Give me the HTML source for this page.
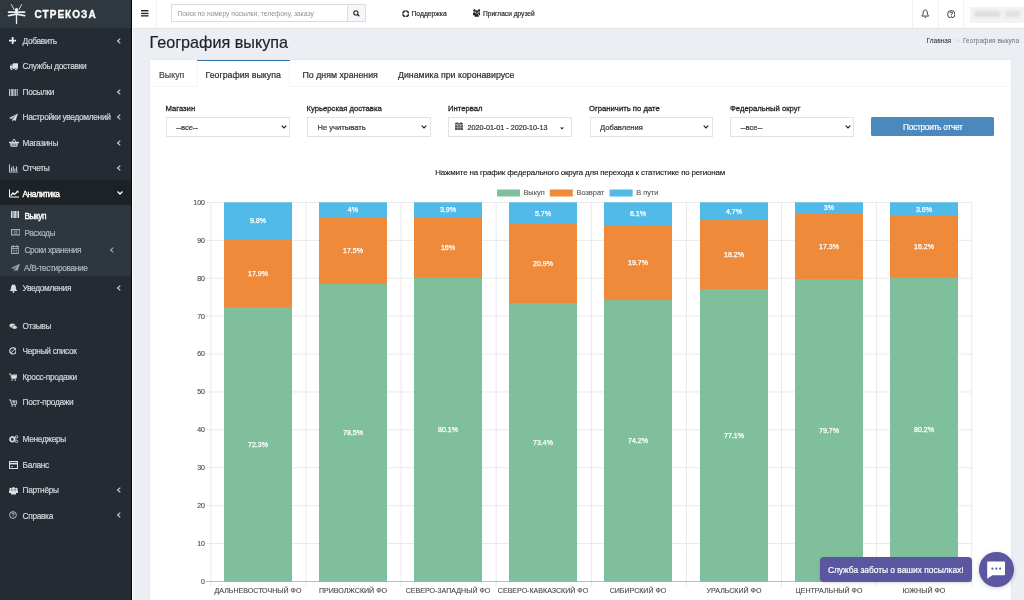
<!DOCTYPE html>
<html><head><meta charset="utf-8">
<style>
*{box-sizing:border-box;margin:0;padding:0}
html,body{width:1024px;height:600px;overflow:hidden}
body{font-family:"Liberation Sans",sans-serif;background:#ebeef3;position:relative;color:#212529}
.abs{position:absolute}
.txt{white-space:nowrap}
#sb{position:absolute;left:0;top:0;width:131px;height:600px;background:#242b32}
#sbline{position:absolute;left:131px;top:0;width:1px;height:600px;background:#05070a}
#sbwhite{position:absolute;left:132px;top:0;width:1px;height:600px;background:#fff}
#logo{position:absolute;left:0;top:0;width:131px;height:28px;background:#2e383e}
.logotxt{position:absolute;left:34.5px;top:9px;font-size:10px;font-weight:bold;color:#fff;letter-spacing:1.05px;line-height:11px;-webkit-text-stroke:0.3px #fff}
.nav{position:absolute;left:22.5px;font-size:8.3px;letter-spacing:-0.3px;color:#d2d6db;white-space:nowrap;line-height:10px;-webkit-text-stroke:0.2px currentColor}
.ico{position:absolute;left:8.5px;width:9px;height:9px}
.chev{position:absolute;left:116px;width:6px;height:6px}
#hdr{position:absolute;left:133px;top:0;width:891px;height:29px;background:#fff;border-bottom:1px solid #dfe3e7}
.tab{top:70px;font-size:8.8px;line-height:10px;-webkit-text-stroke:0.22px currentColor}
.lbl{top:103.5px;font-size:7.7px;color:#24282c;line-height:9px;-webkit-text-stroke:0.3px #24282c}
.sel{top:117.2px;height:19.4px;border:1px solid #e0e2e5;background:#fff}
.sel span{position:absolute;top:5px;font-size:7.6px;color:#33383d;line-height:9px;white-space:nowrap;-webkit-text-stroke:0.22px #33383d}
.sel svg{position:absolute;right:2.5px;top:7px}
.bl{font-size:7.1px;fill:#fff;text-anchor:middle;stroke:#fff;stroke-width:0.25px}
.xl{font-size:7.07px;fill:#444;text-anchor:middle;stroke:#444;stroke-width:0.1px}
.yl{font-size:7px;fill:#444;text-anchor:end;stroke:#444;stroke-width:0.1px}
.ct{font-size:7.95px;letter-spacing:-0.16px;fill:#222;text-anchor:middle;stroke:#222;stroke-width:0.15px}
.lg{font-size:7.4px;fill:#555;stroke:#555;stroke-width:0.1px}
</style></head><body>
<div style="position:absolute;left:0;top:0;width:1024px;height:600px;overflow:hidden;will-change:transform">
<div id="sb"></div>
<div id="logo"></div>
<div class="abs" style="left:0;top:180px;width:131px;height:25px;background:#1d2226"></div>
<div class="abs" style="left:0;top:205px;width:131px;height:70.6px;background:#2e373e"></div>
<div id="sbline"></div>
<div id="sbwhite"></div>
<!-- logo -->
<svg class="abs" style="left:0;top:0" width="32" height="28" viewBox="0 0 32 28">
 <g stroke="#eeeeee" fill="none" stroke-linecap="round">
  <path d="M11.4 4.6L14 9.4M21.6 4.6L19 9.4" stroke-width="0.9"/>
  <path d="M8.6 12.1H15.2M17.8 12.1H24.6M8.6 15.6L15.2 14.3M17.8 14.3L24.6 15.6" stroke-width="1.8"/>
  <path d="M16.5 15V23.5" stroke-width="1.3"/>
 </g>
 <circle cx="16.5" cy="9.8" r="1.7" fill="#eeeeee"/>
 <rect x="15.2" y="10.5" width="2.6" height="4.5" fill="#eeeeee"/>
</svg>
<div class="logotxt">СТРЕКОЗА</div>

<!-- items -->
<svg class="ico" style="top:36.8px;left:8.8px;width:7.3px;height:7.3px" viewBox="0 0 7.3 7.3"><path d="M3.65 0v7.3M0 3.65h7.3" stroke="#e8eaec" stroke-width="1.8"/></svg>
<div class="nav" style="top:35.5px">Добавить</div>
<svg class="chev" style="top:37.5px" viewBox="0 0 6 6"><path d="M4.3 0.6L1.6 3L4.3 5.4" stroke="#c8cdd3" stroke-width="1.2" fill="none"/></svg>

<svg class="ico" style="top:62.5px;left:9.8px;width:8px;height:7.5px" viewBox="0 0 8 7.5"><path d="M3 0.3h5v5.5h-5z" fill="#e0e3e6"/><path d="M0 2.8L1.1 1.4H2.8V5.8H0z" fill="#e0e3e6"/><rect x="0.7" y="2" width="1" height="1" fill="#242b32"/><circle cx="1.6" cy="6.3" r="1.1" fill="#e0e3e6" stroke="#242b32" stroke-width="0.4"/><circle cx="6" cy="6.3" r="1.1" fill="#e0e3e6" stroke="#242b32" stroke-width="0.4"/></svg>
<div class="nav" style="top:61px">Службы доставки</div>

<svg class="ico" style="top:88px" viewBox="0 0 9 7"><path d="M0.5 0v7M2.3 0v7M3.6 0v7M5 0v7M6.4 0v7M8.2 0v7" stroke="#d8dbde" stroke-width="0.9"/></svg>
<div class="nav" style="top:87px">Посылки</div>
<svg class="chev" style="top:88.5px" viewBox="0 0 6 6"><path d="M4.3 0.6L1.6 3L4.3 5.4" stroke="#c8cdd3" stroke-width="1.2" fill="none"/></svg>

<svg class="ico" style="top:113px" viewBox="0 0 9 8"><path d="M9 0L0 4.5L2.5 5.5L7 1.5L3.3 6L3.3 8L4.8 6.5L6.5 7.5Z" fill="#d8dbde"/></svg>
<div class="nav" style="top:112px">Настройки уведомлений</div>
<svg class="chev" style="top:113.5px" viewBox="0 0 6 6"><path d="M4.3 0.6L1.6 3L4.3 5.4" stroke="#c8cdd3" stroke-width="1.2" fill="none"/></svg>

<svg class="ico" style="top:138px;width:10px" viewBox="0 0 10 9"><path d="M3 4L5 1L7 4" stroke="#d8dbde" stroke-width="0.9" fill="none"/><path d="M0 3.8h10v1.4h-10z" fill="#d8dbde"/><path d="M1 5.2h8l-0.8 3.6h-6.4z" fill="#d8dbde"/><path d="M3.2 6v2M5 6v2M6.8 6v2" stroke="#262c33" stroke-width="0.7"/></svg>
<div class="nav" style="top:137.5px">Магазины</div>
<svg class="chev" style="top:139.5px" viewBox="0 0 6 6"><path d="M4.3 0.6L1.6 3L4.3 5.4" stroke="#c8cdd3" stroke-width="1.2" fill="none"/></svg>

<svg class="ico" style="top:164px" viewBox="0 0 9 8"><path d="M0.5 0v7.5h8.5" stroke="#d8dbde" stroke-width="0.9" fill="none"/><path d="M2.5 3v3.5M4.2 1.5v5M5.9 4v2.5M7.6 2v4.5" stroke="#d8dbde" stroke-width="1"/></svg>
<div class="nav" style="top:163px">Отчеты</div>
<svg class="chev" style="top:164.5px" viewBox="0 0 6 6"><path d="M4.3 0.6L1.6 3L4.3 5.4" stroke="#c8cdd3" stroke-width="1.2" fill="none"/></svg>

<svg class="ico" style="top:189px;width:10px" viewBox="0 0 10 8"><path d="M0.5 0v7.5h9.5" stroke="#fff" stroke-width="1" fill="none"/><path d="M1.8 6L4 3.5L5.5 5L8.5 2" stroke="#fff" stroke-width="1.2" fill="none"/><path d="M7 1.3h2.5v2.5z" fill="#fff"/></svg>
<div class="nav" style="top:188.5px;color:#fff;letter-spacing:-0.45px;-webkit-text-stroke:0.4px #fff">Аналитика</div>
<svg class="chev" style="top:189.5px;left:116.5px" viewBox="0 0 6 6"><path d="M0.5 1.5L3 4L5.5 1.5" stroke="#fff" stroke-width="1.3" fill="none"/></svg>

<svg class="ico" style="top:211px;left:11px;width:8px;height:7px" viewBox="0 0 8 7"><path d="M0.5 0v7M2 0v7M3.3 0v7M4.6 0v7M6 0v7M7.5 0v7" stroke="#f0f0f0" stroke-width="0.9"/></svg>
<div class="nav" style="top:210.5px;left:24.5px;color:#fff;letter-spacing:-0.45px;-webkit-text-stroke:0.4px #fff">Выкуп</div>

<svg class="ico" style="top:229px;left:10.5px;width:9.5px;height:6.5px" viewBox="0 0 9.5 6.5"><rect x="0.6" y="0.6" width="8.3" height="5.3" stroke="#a3abb3" stroke-width="1.2" fill="none"/><ellipse cx="4.75" cy="3.25" rx="1.5" ry="1.3" stroke="#a3abb3" stroke-width="0.9" fill="none"/></svg>
<div class="nav" style="top:227.5px;left:24.5px;color:#aeb6be;letter-spacing:-0.4px">Расходы</div>

<svg class="ico" style="top:245px;left:10.7px;width:8.3px;height:9px" viewBox="0 0 8.3 9"><rect x="0.5" y="1.5" width="7.3" height="7" stroke="#a3abb3" stroke-width="1" fill="none"/><path d="M0.5 3.4h7.3M2.2 0v2.5M6.1 0v2.5" stroke="#a3abb3" stroke-width="1"/><path d="M2.9 3.4v5M5.4 3.4v5M0.5 5.9h7.3" stroke="#a3abb3" stroke-width="0.5"/></svg>
<div class="nav" style="top:244.5px;left:24.5px;color:#aeb6be;letter-spacing:-0.4px">Сроки хранения</div>
<svg class="chev" style="top:246.5px;left:108.5px" viewBox="0 0 6 6"><path d="M4.3 0.6L1.6 3L4.3 5.4" stroke="#9aa2aa" stroke-width="1.2" fill="none"/></svg>

<svg class="ico" style="top:263px;left:11px" viewBox="0 0 9 8"><path d="M9 0L0 4.5L2.5 5.5L7 1.5L3.3 6L3.3 8L4.8 6.5L6.5 7.5Z" fill="#9aa2aa"/></svg>
<div class="nav" style="top:262.5px;left:24px;color:#aeb6be;letter-spacing:-0.35px">A/B-тестирование</div>

<svg class="ico" style="top:283.5px" viewBox="0 0 9 9"><path d="M4.5 0.5C2.5 0.5 2 2.5 2 4C2 5.5 1 6.5 0.5 7h8C8 6.5 7 5.5 7 4C7 2.5 6.5 0.5 4.5 0.5Z" fill="#d8dbde"/><circle cx="4.5" cy="8" r="1" fill="#d8dbde"/></svg>
<div class="nav" style="top:283px">Уведомления</div>
<svg class="chev" style="top:284.5px" viewBox="0 0 6 6"><path d="M4.3 0.6L1.6 3L4.3 5.4" stroke="#c8cdd3" stroke-width="1.2" fill="none"/></svg>

<svg class="ico" style="top:322.8px;left:9px;width:8.5px;height:6.5px" viewBox="0 0 9 7.5"><ellipse cx="3.5" cy="3" rx="3.3" ry="2.4" fill="#d8dbde"/><ellipse cx="6" cy="5" rx="3" ry="2.2" fill="#d8dbde" stroke="#262c33" stroke-width="0.6"/></svg>
<div class="nav" style="top:321px">Отзывы</div>

<svg class="ico" style="top:347px;left:8.7px;width:7.8px;height:7.8px" viewBox="0 0 9 9"><circle cx="4.5" cy="4.5" r="3.6" stroke="#e0e3e6" stroke-width="1.3" fill="none"/><path d="M2 7L7 2" stroke="#e0e3e6" stroke-width="1.1"/></svg>
<div class="nav" style="top:346px">Черный список</div>

<svg class="ico" style="top:372.5px;left:9px;width:8px;height:8px" viewBox="0 0 9 9"><path d="M0 1h1.7l1.3 5h5l1-3.8h-6" stroke="#e0e3e6" stroke-width="1" fill="none"/><path d="M2.5 2.5h6l-0.8 3h-4.6z" fill="#e0e3e6"/><circle cx="3.5" cy="7.8" r="0.9" fill="#e0e3e6"/><circle cx="7" cy="7.8" r="0.9" fill="#e0e3e6"/></svg>
<div class="nav" style="top:372px">Кросс-продажи</div>

<svg class="ico" style="top:398.5px;left:9px;width:8px;height:8px" viewBox="0 0 9 9"><path d="M0 1h1.7l1.3 5h5l1-3.8h-6" stroke="#e0e3e6" stroke-width="1" fill="none"/><path d="M5.5 2v3M4 3.5h3" stroke="#e0e3e6" stroke-width="0.9"/><circle cx="3.5" cy="7.8" r="0.9" fill="#e0e3e6"/><circle cx="7" cy="7.8" r="0.9" fill="#e0e3e6"/></svg>
<div class="nav" style="top:397px">Пост-продажи</div>

<svg class="ico" style="top:434.8px;left:9px;width:9.5px;height:8.5px" viewBox="0 0 10 9"><circle cx="3.5" cy="4.6" r="2.3" stroke="#e0e3e6" stroke-width="1.8" fill="none" stroke-dasharray="1.2 0.6"/><circle cx="3.5" cy="4.6" r="2.6" stroke="#e0e3e6" stroke-width="1.2" fill="none"/><circle cx="8" cy="2" r="1.3" stroke="#e0e3e6" stroke-width="0.9" fill="none"/><circle cx="8" cy="6.8" r="1.3" stroke="#e0e3e6" stroke-width="0.9" fill="none"/></svg>
<div class="nav" style="top:434px">Менеджеры</div>

<svg class="ico" style="top:460.5px;left:9px;width:9px;height:8px" viewBox="0 0 9 8"><rect x="0.5" y="0.5" width="8" height="7" stroke="#e0e3e6" stroke-width="1" fill="none"/><path d="M0.5 2.6h8" stroke="#e0e3e6" stroke-width="1.6"/><path d="M1.8 5.6h2.4" stroke="#e0e3e6" stroke-width="0.7"/></svg>
<div class="nav" style="top:459.5px">Баланс</div>

<svg class="ico" style="top:485.5px" viewBox="0 0 9 9"><circle cx="4.5" cy="2.5" r="1.6" fill="#e0e3e6"/><circle cx="1.6" cy="3" r="1.2" fill="#e0e3e6"/><circle cx="7.4" cy="3" r="1.2" fill="#e0e3e6"/><path d="M2 8.5v-2.5a2.5 2 0 0 1 5 0v2.5z" fill="#e0e3e6"/><path d="M0 7v-1.8a1.6 1.4 0 0 1 2.6-1v2.8z M9 7v-1.8a1.6 1.4 0 0 0 -2.6-1v2.8z" fill="#e0e3e6"/></svg>
<div class="nav" style="top:485px">Партнёры</div>
<svg class="chev" style="top:486.5px" viewBox="0 0 6 6"><path d="M4.3 0.6L1.6 3L4.3 5.4" stroke="#c8cdd3" stroke-width="1.2" fill="none"/></svg>

<svg class="ico" style="top:511.2px;left:8.8px;width:8px;height:8px" viewBox="0 0 9 9"><circle cx="4.5" cy="4.5" r="3.8" stroke="#e0e3e6" stroke-width="0.85" fill="none"/><path d="M3.2 3.5C3.2 2.7 3.8 2.2 4.5 2.2C5.2 2.2 5.8 2.7 5.8 3.4C5.8 4.1 4.8 4.3 4.6 4.9V5.5" stroke="#e0e3e6" stroke-width="0.9" fill="none"/><circle cx="4.6" cy="6.6" r="0.55" fill="#e0e3e6"/></svg>
<div class="nav" style="top:510.5px">Справка</div>
<svg class="chev" style="top:512px" viewBox="0 0 6 6"><path d="M4.3 0.6L1.6 3L4.3 5.4" stroke="#c8cdd3" stroke-width="1.2" fill="none"/></svg>

<div id="hdr"></div>
<svg class="abs" style="left:140.5px;top:0" width="8" height="20" viewBox="0 0 8 20"><rect x="0" y="10" width="7.5" height="1.4" fill="#222"/><rect x="0" y="12.8" width="7.5" height="1.3" fill="#222"/><rect x="0" y="15.2" width="7.5" height="1.3" fill="#222"/></svg>
<div class="abs" style="left:156px;top:0;width:1px;height:28px;background:#f0f1f3"></div>
<div class="abs" style="left:171px;top:4px;width:195px;height:17.5px;border:1px solid #dadde0;background:#fff"></div>
<div class="abs" style="left:346.5px;top:4px;width:19.5px;height:17.5px;border:1px solid #dadde0;background:#f6f7f8"></div>
<div class="abs txt" style="left:177.5px;top:9.5px;font-size:6.65px;color:#8c9196;line-height:8px">Поиск по номеру посылки, телефону, заказу</div>
<svg class="abs" style="left:352.5px;top:9.5px" width="7" height="7" viewBox="0 0 7 7"><circle cx="2.9" cy="2.9" r="2.1" stroke="#222" stroke-width="1.1" fill="none"/><path d="M4.4 4.4L6.3 6.3" stroke="#222" stroke-width="1.3"/></svg>

<svg class="abs" style="left:401.5px;top:9.8px" width="7.5" height="7.5" viewBox="0 0 8 8"><circle cx="4" cy="4" r="3" stroke="#222" stroke-width="1.6" fill="none"/><path d="M4 0.5v7M0.5 4h7" stroke="#fff" stroke-width="0.9"/></svg>
<div class="abs txt" style="left:411.5px;top:9px;font-size:6.75px;color:#2b2f33;line-height:9px;-webkit-text-stroke:0.2px #2b2f33">Поддержка</div>
<svg class="abs" style="left:472.5px;top:9.2px" width="7.5" height="7.8" viewBox="0 0 7.5 7.8"><circle cx="1.4" cy="1.5" r="1.2" fill="#222"/><circle cx="6.1" cy="1.5" r="1.2" fill="#222"/><circle cx="3.75" cy="2.6" r="1.4" fill="#222"/><path d="M0 6.2V4.2Q0 3.2 1.4 3.2Q2.2 3.2 2.4 3.8V6.2z M7.5 6.2V4.2Q7.5 3.2 6.1 3.2Q5.3 3.2 5.1 3.8V6.2z M1.6 7.8V5.4Q1.6 4.3 3.75 4.3Q5.9 4.3 5.9 5.4V7.8z" fill="#222"/></svg>
<div class="abs txt" style="left:483px;top:9px;font-size:6.6px;color:#2b2f33;line-height:9px;-webkit-text-stroke:0.2px #2b2f33">Пригласи друзей</div>

<div class="abs" style="left:912px;top:0;width:1px;height:28px;background:#f0f1f3"></div>
<div class="abs" style="left:938px;top:0;width:1px;height:28px;background:#f0f1f3"></div>
<div class="abs" style="left:963px;top:0;width:1px;height:28px;background:#f0f1f3"></div>
<svg class="abs" style="left:921px;top:8.5px" width="8.5" height="9" viewBox="0 0 9 9"><path d="M4.5 0.8C2.8 0.8 2.3 2.4 2.3 4C2.3 5.6 1.4 6.5 0.8 7.2h7.4C7.6 6.5 6.7 5.6 6.7 4C6.7 2.4 6.2 0.8 4.5 0.8Z" stroke="#222" stroke-width="0.9" fill="none"/><path d="M3.6 8a0.9 0.9 0 0 0 1.8 0z" fill="#222"/></svg>
<svg class="abs" style="left:946.5px;top:9.5px" width="8.5" height="8.5" viewBox="0 0 8 8"><circle cx="4" cy="4" r="3.5" stroke="#222" stroke-width="0.8" fill="none"/><path d="M2.75 3.05C2.75 2.3 3.3 1.85 4 1.85C4.7 1.85 5.25 2.3 5.25 2.95C5.25 3.6 4.3 3.8 4.1 4.4V4.9" stroke="#222" stroke-width="0.85" fill="none"/><circle cx="4.1" cy="5.95" r="0.5" fill="#222"/></svg>
<div class="abs" style="left:969.5px;top:7.2px;width:56px;height:15.6px;background:#f3f3f3;filter:blur(0.5px)"></div>
<div class="abs" style="left:973.5px;top:11.2px;width:26.5px;height:5.8px;background:#dddddd;filter:blur(1.6px)"></div>
<div class="abs" style="left:1005px;top:11.2px;width:15px;height:5.8px;background:#e0e0e0;filter:blur(1.6px)"></div>
<div class="abs txt" style="left:149.5px;top:33px;font-size:16.2px;color:#1f2226;line-height:18px;-webkit-text-stroke:0.2px #1f2226">География выкупа</div>
<div class="abs txt" style="left:926.5px;top:36.5px;font-size:6.55px;color:#212529;line-height:8px">Главная</div>
<div class="abs txt" style="left:956px;top:36.5px;font-size:6.55px;color:#c8ccd0;line-height:8px">&gt;</div>
<div class="abs txt" style="left:963px;top:36.5px;font-size:6.55px;color:#6c757d;line-height:8px">География выкупа</div>

<div class="abs" style="left:149.5px;top:60px;width:861.5px;height:560px;background:#fff;box-shadow:0 0 1px rgba(0,0,0,.12)"></div>
<div class="abs" style="left:149.5px;top:85.5px;width:861.5px;height:1px;background:#f3f4f5"></div>
<div class="abs" style="left:196.5px;top:60px;width:93.5px;height:26.5px;background:#fff;border-left:1px solid #f6f6f7;border-right:1px solid #f6f6f7"></div>
<div class="abs" style="left:196.5px;top:59.5px;width:93.5px;height:1.7px;background:#2f73ad"></div>
<div class="abs txt tab" style="left:159px;color:#444a50">Выкуп</div>
<div class="abs txt tab" style="left:205.5px;color:#2d3136">География выкупа</div>
<div class="abs txt tab" style="left:302.5px;color:#2d3136">По дням хранения</div>
<div class="abs txt tab" style="left:398px;color:#2d3136">Динамика при коронавирусе</div>

<div class="abs txt lbl" style="left:165.5px">Магазин</div>
<div class="abs txt lbl" style="left:306.5px">Курьерская доставка</div>
<div class="abs txt lbl" style="left:448px">Интервал</div>
<div class="abs txt lbl" style="left:589px">Ограничить по дате</div>
<div class="abs txt lbl" style="left:730px">Федеральный округ</div>

<div class="abs sel" style="left:165.5px;width:124.5px"><span style="left:9.5px">--все--</span><svg width="6" height="4" viewBox="0 0 6 4"><path d="M0.7 0.7L3 3L5.3 0.7" stroke="#222" stroke-width="1.2" fill="none"/></svg></div>
<div class="abs sel" style="left:307px;width:123.5px"><span style="left:9.5px">Не учитывать</span><svg width="6" height="4" viewBox="0 0 6 4"><path d="M0.7 0.7L3 3L5.3 0.7" stroke="#222" stroke-width="1.2" fill="none"/></svg></div>
<div class="abs sel" style="left:448px;width:124px"><span style="left:18.5px;font-size:7.2px">2020-01-01 - 2020-10-13</span></div>
<svg class="abs" style="left:455px;top:122px" width="8" height="8" viewBox="0 0 8 8"><rect x="0" y="1" width="8" height="7" fill="#555"/><path d="M0 2.8h8" stroke="#fff" stroke-width="0.6"/><path d="M2 0v2M6 0v2" stroke="#555" stroke-width="1"/><path d="M2.7 2.8v5M5.3 2.8v5M0 5.3h8" stroke="#fff" stroke-width="0.35"/></svg>
<svg class="abs" style="left:559.5px;top:126.5px" width="4" height="3" viewBox="0 0 4 3"><path d="M0 0.5h4L2 2.5z" fill="#222"/></svg>
<div class="abs sel" style="left:589.5px;width:123px"><span style="left:9.5px">Добавления</span><svg width="6" height="4" viewBox="0 0 6 4"><path d="M0.7 0.7L3 3L5.3 0.7" stroke="#222" stroke-width="1.2" fill="none"/></svg></div>
<div class="abs sel" style="left:730px;width:124px"><span style="left:9.5px">--все--</span><svg width="6" height="4" viewBox="0 0 6 4"><path d="M0.7 0.7L3 3L5.3 0.7" stroke="#222" stroke-width="1.2" fill="none"/></svg></div>
<div class="abs" style="left:871px;top:117px;width:123.2px;height:19.4px;background:#4a88bd;border-radius:1.5px"></div>
<div class="abs txt" style="left:871.5px;width:122.7px;top:122.5px;text-align:center;font-size:8.2px;letter-spacing:-0.2px;color:#fff;line-height:9px;-webkit-text-stroke:0.2px #fff">Построить отчет</div>

<svg class="abs" style="left:0;top:0" width="1024" height="600" viewBox="0 0 1024 600">
<line x1="206" y1="543.55" x2="972" y2="543.55" stroke="#e9e9e9" stroke-width="1"/>
<line x1="206" y1="505.65" x2="972" y2="505.65" stroke="#e9e9e9" stroke-width="1"/>
<line x1="206" y1="467.75" x2="972" y2="467.75" stroke="#e9e9e9" stroke-width="1"/>
<line x1="206" y1="429.85" x2="972" y2="429.85" stroke="#e9e9e9" stroke-width="1"/>
<line x1="206" y1="391.95" x2="972" y2="391.95" stroke="#e9e9e9" stroke-width="1"/>
<line x1="206" y1="354.05" x2="972" y2="354.05" stroke="#e9e9e9" stroke-width="1"/>
<line x1="206" y1="316.15" x2="972" y2="316.15" stroke="#e9e9e9" stroke-width="1"/>
<line x1="206" y1="278.25" x2="972" y2="278.25" stroke="#e9e9e9" stroke-width="1"/>
<line x1="206" y1="240.35" x2="972" y2="240.35" stroke="#e9e9e9" stroke-width="1"/>
<line x1="206" y1="202.45" x2="972" y2="202.45" stroke="#e9e9e9" stroke-width="1"/>
<line x1="210.90" y1="202" x2="210.90" y2="587" stroke="#e9e9e9" stroke-width="1"/>
<line x1="306.00" y1="202" x2="306.00" y2="587" stroke="#e9e9e9" stroke-width="1"/>
<line x1="401.10" y1="202" x2="401.10" y2="587" stroke="#e9e9e9" stroke-width="1"/>
<line x1="496.20" y1="202" x2="496.20" y2="587" stroke="#e9e9e9" stroke-width="1"/>
<line x1="591.30" y1="202" x2="591.30" y2="587" stroke="#e9e9e9" stroke-width="1"/>
<line x1="686.40" y1="202" x2="686.40" y2="587" stroke="#e9e9e9" stroke-width="1"/>
<line x1="781.50" y1="202" x2="781.50" y2="587" stroke="#e9e9e9" stroke-width="1"/>
<line x1="876.60" y1="202" x2="876.60" y2="587" stroke="#e9e9e9" stroke-width="1"/>
<line x1="971.70" y1="202" x2="971.70" y2="587" stroke="#e9e9e9" stroke-width="1"/>
<line x1="206" y1="581.5" x2="972" y2="581.5" stroke="#bdbdbd" stroke-width="1"/>
<rect x="224.00" y="202.30" width="68" height="379.00" fill="#52bae8"/>
<rect x="224.00" y="239.44" width="68" height="341.86" fill="#ee8a39"/>
<rect x="224.00" y="307.28" width="68" height="274.02" fill="#7fbf9b"/>
<text x="258.00" y="446.69" class="bl">72.3%</text>
<text x="258.00" y="275.76" class="bl">17.9%</text>
<text x="258.00" y="223.27" class="bl">9.8%</text>
<text x="258.00" y="593.3" class="xl">ДАЛЬНЕВОСТОЧНЫЙ ФО</text>
<rect x="319.00" y="202.30" width="68" height="379.00" fill="#52bae8"/>
<rect x="319.00" y="217.46" width="68" height="363.84" fill="#ee8a39"/>
<rect x="319.00" y="283.78" width="68" height="297.51" fill="#7fbf9b"/>
<text x="353.00" y="434.94" class="bl">78.5%</text>
<text x="353.00" y="253.02" class="bl">17.5%</text>
<text x="353.00" y="212.28" class="bl">4%</text>
<text x="353.00" y="593.3" class="xl">ПРИВОЛЖСКИЙ ФО</text>
<rect x="414.00" y="202.30" width="68" height="379.00" fill="#52bae8"/>
<rect x="414.00" y="217.08" width="68" height="364.22" fill="#ee8a39"/>
<rect x="414.00" y="277.72" width="68" height="303.58" fill="#7fbf9b"/>
<text x="448.00" y="431.91" class="bl">80.1%</text>
<text x="448.00" y="249.80" class="bl">16%</text>
<text x="448.00" y="212.09" class="bl">3.9%</text>
<text x="448.00" y="593.3" class="xl">СЕВЕРО-ЗАПАДНЫЙ ФО</text>
<rect x="509.00" y="202.30" width="68" height="379.00" fill="#52bae8"/>
<rect x="509.00" y="223.90" width="68" height="357.40" fill="#ee8a39"/>
<rect x="509.00" y="303.11" width="68" height="278.19" fill="#7fbf9b"/>
<text x="543.00" y="444.61" class="bl">73.4%</text>
<text x="543.00" y="265.91" class="bl">20.9%</text>
<text x="543.00" y="215.50" class="bl">5.7%</text>
<text x="543.00" y="593.3" class="xl">СЕВЕРО-КАВКАЗСКИЙ ФО</text>
<rect x="604.00" y="202.30" width="68" height="379.00" fill="#52bae8"/>
<rect x="604.00" y="225.42" width="68" height="355.88" fill="#ee8a39"/>
<rect x="604.00" y="300.08" width="68" height="281.22" fill="#7fbf9b"/>
<text x="638.00" y="443.09" class="bl">74.2%</text>
<text x="638.00" y="265.15" class="bl">19.7%</text>
<text x="638.00" y="216.26" class="bl">6.1%</text>
<text x="638.00" y="593.3" class="xl">СИБИРСКИЙ ФО</text>
<rect x="700.00" y="202.30" width="68" height="379.00" fill="#52bae8"/>
<rect x="700.00" y="220.11" width="68" height="361.19" fill="#ee8a39"/>
<rect x="700.00" y="289.09" width="68" height="292.21" fill="#7fbf9b"/>
<text x="734.00" y="437.60" class="bl">77.1%</text>
<text x="734.00" y="257.00" class="bl">18.2%</text>
<text x="734.00" y="213.61" class="bl">4.7%</text>
<text x="734.00" y="593.3" class="xl">УРАЛЬСКИЙ ФО</text>
<rect x="795.00" y="202.30" width="68" height="379.00" fill="#52bae8"/>
<rect x="795.00" y="213.67" width="68" height="367.63" fill="#ee8a39"/>
<rect x="795.00" y="279.24" width="68" height="302.06" fill="#7fbf9b"/>
<text x="829.00" y="432.67" class="bl">79.7%</text>
<text x="829.00" y="248.85" class="bl">17.3%</text>
<text x="829.00" y="210.38" class="bl">3%</text>
<text x="829.00" y="593.3" class="xl">ЦЕНТРАЛЬНЫЙ ФО</text>
<rect x="890.00" y="202.30" width="68" height="379.00" fill="#52bae8"/>
<rect x="890.00" y="215.94" width="68" height="365.36" fill="#ee8a39"/>
<rect x="890.00" y="277.34" width="68" height="303.96" fill="#7fbf9b"/>
<text x="924.00" y="431.72" class="bl">80.2%</text>
<text x="924.00" y="249.04" class="bl">16.2%</text>
<text x="924.00" y="211.52" class="bl">3.6%</text>
<text x="924.00" y="593.3" class="xl">ЮЖНЫЙ ФО</text>
<text x="205" y="583.80" class="yl">0</text>
<text x="205" y="545.90" class="yl">10</text>
<text x="205" y="508.00" class="yl">20</text>
<text x="205" y="470.10" class="yl">30</text>
<text x="205" y="432.20" class="yl">40</text>
<text x="205" y="394.30" class="yl">50</text>
<text x="205" y="356.40" class="yl">60</text>
<text x="205" y="318.50" class="yl">70</text>
<text x="205" y="280.60" class="yl">80</text>
<text x="205" y="242.70" class="yl">90</text>
<text x="205" y="204.80" class="yl">100</text>
<text x="580.2" y="175" class="ct">Нажмите на график федерального округа для перехода к статистике по регионам</text>
<rect x="497" y="189.5" width="23" height="7" fill="#7fbf9b"/>
<text x="523.4" y="195.4" class="lg">Выкуп</text>
<rect x="549.8" y="189.5" width="23" height="7" fill="#ee8a39"/>
<text x="576.5" y="195.4" class="lg">Возврат</text>
<rect x="609.6" y="189.5" width="23" height="7" fill="#52bae8"/>
<text x="636.2" y="195.4" class="lg">В пути</text>
</svg>
<div class="abs" style="left:819.5px;top:557px;width:152.5px;height:24.5px;background:#5a56a0;border-radius:4px;box-shadow:0 1px 3px rgba(0,0,0,.15)"></div>
<div class="abs txt" style="left:819.5px;width:152.5px;top:564.5px;text-align:center;font-size:8.4px;color:#fff;line-height:10px;-webkit-text-stroke:0.2px #fff">Служба заботы о ваших посылках!</div>
<div class="abs" style="left:979px;top:552px;width:34.5px;height:34.5px;border-radius:50%;background:#5a56a0;box-shadow:0 1px 4px rgba(0,0,0,.2)"></div>
<svg class="abs" style="left:986px;top:560px" width="20" height="20" viewBox="0 0 20 20"><path d="M2 1.6H18.2a0.8 0.8 0 0 1 0.8 0.8V14.5a0.8 0.8 0 0 1 -0.8 0.8H6.4L1.2 18.8V2.4a0.8 0.8 0 0 1 0.8 -0.8z" fill="#fff"/><circle cx="6.4" cy="8.6" r="1.1" fill="#5a56a0"/><circle cx="10.3" cy="8.6" r="1.1" fill="#5a56a0"/><circle cx="14.1" cy="8.6" r="1.1" fill="#5a56a0"/></svg>

</div>
</body></html>
